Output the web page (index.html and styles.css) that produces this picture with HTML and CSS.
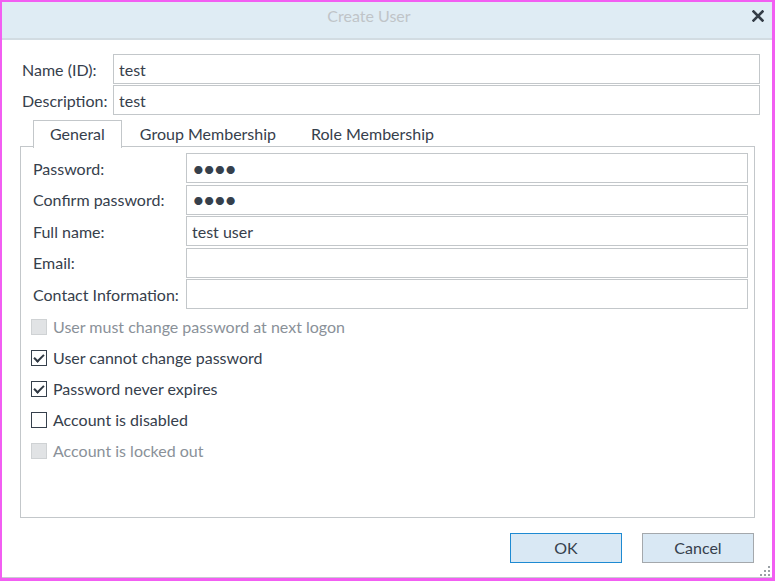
FILE: index.html
```html
<!DOCTYPE html>
<html lang="en">

<head>
    <meta charset="UTF-8">
    <meta name="viewport" content="width=device-width, initial-scale=1.0">
    <title>Create User</title>
    <link rel="stylesheet" href="styles.css">
</head>

<body>
    <div class="window">
        <!-- Title bar -->
        <div class="titlebar">
            <span class="title">Create User</span>
            <svg class="close" width="12" height="12" viewBox="0 0 12 12">
                <path d="M1.5 1.5 L10.5 10.5 M10.5 1.5 L1.5 10.5" stroke="#343d47" stroke-width="2.6" stroke-linecap="square" />
            </svg>
        </div>

        <div class="content">
            <!-- Name and description -->
            <div class="top-form">
                <label for="name">Name (ID):</label>
                <input type="text" id="name" value="test">
                <label for="description">Description:</label>
                <input type="text" id="description" value="test">
            </div>

            <!-- Tabs -->
            <div class="tabs">
                <div class="tab active">General</div>
                <div class="tab">Group Membership</div>
                <div class="tab">Role Membership</div>
            </div>

            <div class="tab-panel">
                <div class="general-form">
                    <label for="password">Password:</label>
                    <input type="password" id="password" value="test">
                    <label for="confirm">Confirm password:</label>
                    <input type="password" id="confirm" value="test">
                    <label for="fullname">Full name:</label>
                    <input type="text" id="fullname" value="test user">
                    <label for="email">Email:</label>
                    <input type="text" id="email">
                    <label for="contact">Contact Information:</label>
                    <input type="text" id="contact">
                </div>

                <div class="options">
                    <div class="option disabled"><span class="box"></span>User must change password at next logon</div>
                    <div class="option"><span class="box checked"></span>User cannot change password</div>
                    <div class="option"><span class="box checked"></span>Password never expires</div>
                    <div class="option"><span class="box"></span>Account is disabled</div>
                    <div class="option disabled"><span class="box"></span>Account is locked out</div>
                </div>
            </div>

            <div class="buttons">
                <button class="primary">OK</button>
                <button>Cancel</button>
            </div>
        </div>

        <svg class="grip" width="10" height="10" viewBox="0 0 10 10">
            <rect x="8" y="0" width="2" height="2" fill="#9aa0a6" />
            <rect x="4" y="4" width="2" height="2" fill="#9aa0a6" />
            <rect x="8" y="4" width="2" height="2" fill="#9aa0a6" />
            <rect x="0" y="8" width="2" height="2" fill="#9aa0a6" />
            <rect x="4" y="8" width="2" height="2" fill="#9aa0a6" />
            <rect x="8" y="8" width="2" height="2" fill="#9aa0a6" />
        </svg>
    </div>
</body>

</html>
```

FILE: styles.css
```css
body {
    margin: 0;
    font-family: Lato, "Open Sans", sans-serif;
    font-size: 16px;
    color: #36404c;
}

.window {
    position: relative;
    width: 775px;
    height: 581px;
    box-sizing: border-box;
    border: 2px solid #f25ef2;
    border-right-width: 3px;
    border-bottom-width: 3px;
    background: white;
    display: flex;
    flex-direction: column;
    box-shadow: inset 0 -1px 0 #c8ccd0;
}

.titlebar {
    height: 36px;
    background-color: #dfecf4;
    border-bottom: 2px solid #d2dce2;
    display: flex;
    align-items: center;
    justify-content: center;
    position: relative;
}

.title {
    color: #bfc4c8;
    font-size: 16px;
    margin-right: 36px;
    margin-top: -10px;
}

.close {
    position: absolute;
    right: 8px;
    top: 8px;
}

.content {
    flex: 1;
    display: flex;
    flex-direction: column;
    padding: 14px 12px 15px 20px;
}

.top-form {
    display: grid;
    grid-template-columns: 91px 1fr;
    row-gap: 1px;
    align-items: center;
}

input[type="text"],
input[type="password"] {
    height: 30px;
    box-sizing: border-box;
    border: 1px solid #c3c7ca;
    padding: 0 5px;
    font-family: inherit;
    font-size: 16px;
    color: #36404c;
    outline: none;
}

input[type="password"] {
    font-size: 22px;
    letter-spacing: -2px;
    padding-left: 5px;
}

.tabs {
    display: flex;
    margin-top: 5px;
    padding-left: 11px;
    height: 27px;
    position: relative;
    z-index: 1;
}

.tab {
    padding: 0 16px 0 17px;
    line-height: 25px;
    border: 1px solid transparent;
    border-bottom: none;
}

.tab.active {
    padding: 0 16px;
    background: white;
    border-color: #c3c7ca;
    height: 27px;
}

.tab-panel {
    flex: 1;
    margin: -1px 5px 0 -2px;
    border: 1px solid #c3c7ca;
    padding: 6px 6px 0 12px;
}

.general-form {
    display: grid;
    grid-template-columns: 153px 1fr;
    row-gap: 1.5px;
    align-items: center;
}

.options {
    display: flex;
    flex-direction: column;
    margin-top: 2px;
}

.option {
    display: flex;
    align-items: center;
    height: 31px;
    margin-left: -2px;
}

.option.disabled {
    color: #8a9199;
}

.box {
    width: 14px;
    height: 14px;
    border: 1px solid #36404c;
    margin-right: 6px;
    position: relative;
}

.option.disabled .box {
    background-color: #e1e3e5;
    border-color: #cfd2d4;
}

.box.checked::after {
    content: "";
    position: absolute;
    left: 4px;
    top: 1px;
    width: 4px;
    height: 8px;
    border: solid #2f3842;
    border-width: 0 2px 2px 0;
    transform: rotate(45deg);
}

.buttons {
    display: flex;
    justify-content: flex-end;
    gap: 20px;
    margin-top: 15px;
    margin-right: 6px;
}

button {
    width: 112px;
    height: 30px;
    padding-bottom: 3px;
    background-color: #d9e8f4;
    border: 1px solid #a4a8ac;
    font-family: inherit;
    font-size: 16px;
    color: #36404c;
}

button.primary {
    border-color: #1e8ad2;
}

.grip {
    position: absolute;
    right: 2px;
    bottom: 2px;
}
```
